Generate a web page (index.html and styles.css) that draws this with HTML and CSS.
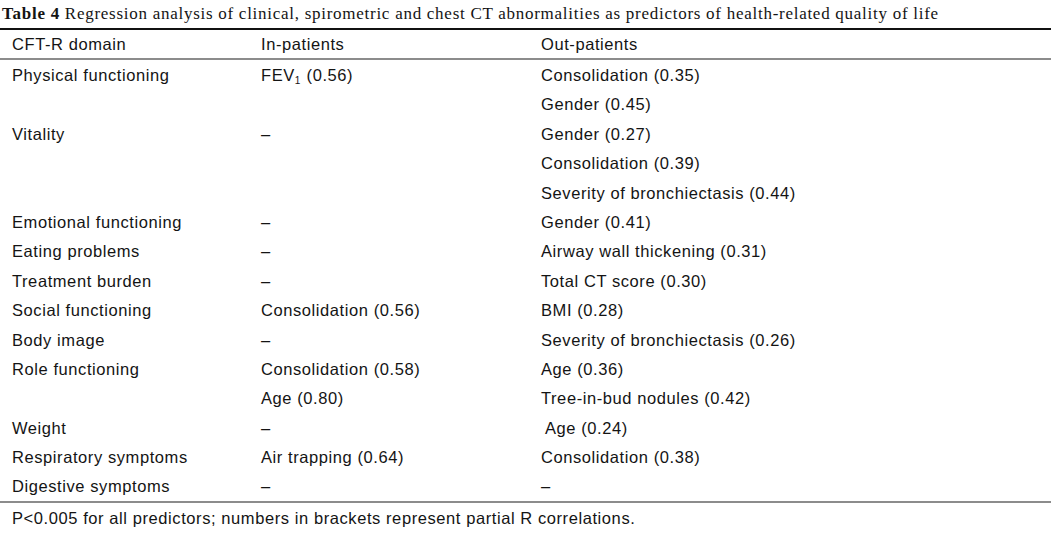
FILE: index.html
```html
<!DOCTYPE html>
<html>
<head>
<meta charset="utf-8">
<link rel="stylesheet" href="styles.css">
</head>
<body>
<div class="wrap">
  <div class="caption"><b>Table 4</b> Regression analysis of clinical, spirometric and chest CT abnormalities as predictors of health-related quality of life</div>
  <div class="table">
    <div class="row head"><div>CFT-R domain</div><div>In-patients</div><div>Out-patients</div></div>
    <div class="body">
      <div class="row"><div>Physical functioning</div><div>FEV<sub>1</sub> (0.56)</div><div>Consolidation (0.35)</div></div>
      <div class="row"><div></div><div></div><div>Gender (0.45)</div></div>
      <div class="row"><div>Vitality</div><div>–</div><div>Gender (0.27)</div></div>
      <div class="row"><div></div><div></div><div>Consolidation (0.39)</div></div>
      <div class="row"><div></div><div></div><div>Severity of bronchiectasis (0.44)</div></div>
      <div class="row"><div>Emotional functioning</div><div>–</div><div>Gender (0.41)</div></div>
      <div class="row"><div>Eating problems</div><div>–</div><div>Airway wall thickening (0.31)</div></div>
      <div class="row"><div>Treatment burden</div><div>–</div><div>Total CT score (0.30)</div></div>
      <div class="row"><div>Social functioning</div><div>Consolidation (0.56)</div><div>BMI (0.28)</div></div>
      <div class="row"><div>Body image</div><div>–</div><div>Severity of bronchiectasis (0.26)</div></div>
      <div class="row"><div>Role functioning</div><div>Consolidation (0.58)</div><div>Age (0.36)</div></div>
      <div class="row"><div></div><div>Age (0.80)</div><div>Tree-in-bud nodules (0.42)</div></div>
      <div class="row"><div>Weight</div><div>–</div><div class="indent">Age (0.24)</div></div>
      <div class="row"><div>Respiratory symptoms</div><div>Air trapping (0.64)</div><div>Consolidation (0.38)</div></div>
      <div class="row"><div>Digestive symptoms</div><div>–</div><div>–</div></div>
    </div>
  </div>
  <div class="note">P&lt;0.005 for all predictors; numbers in brackets represent partial R correlations.</div>
</div>
</body>
</html>
```
FILE: styles.css
```css
html, body {
  margin: 0;
  padding: 0;
  background: #fff;
}
.wrap {
  width: 1051px;
  color: #141414;
}
.caption {
  font-family: "Liberation Serif", "Times New Roman", serif;
  font-size: 17px;
  letter-spacing: 0.73px;
  height: 28px;
  line-height: 28px;
  padding-left: 2px;
  white-space: nowrap;
  border-bottom: 2px solid #111;
}
.table {
  font-family: "Liberation Sans", Arial, sans-serif;
  font-size: 16.5px;
  letter-spacing: 0.58px;
}
.row {
  display: grid;
  grid-template-columns: 249px 280px 1fr;
  padding-left: 12px;
  height: 29.4px;
  line-height: 30px;
  white-space: nowrap;
}
.row.head {
  height: 28px;
  line-height: 29px;
  border-bottom: 2px solid #8c8c8c;
}
.body {
  border-bottom: 2px solid #8c8c8c;
}
.indent {
  padding-left: 4px;
}
sub {
  font-size: 10px;
  line-height: 0;
  vertical-align: -3px;
  letter-spacing: 0;
  margin-right: 1px;
}
.note {
  font-family: "Liberation Sans", Arial, sans-serif;
  font-size: 16.5px;
  letter-spacing: 0.58px;
  padding-left: 12px;
  height: 31px;
  line-height: 31px;
  white-space: nowrap;
}
```
